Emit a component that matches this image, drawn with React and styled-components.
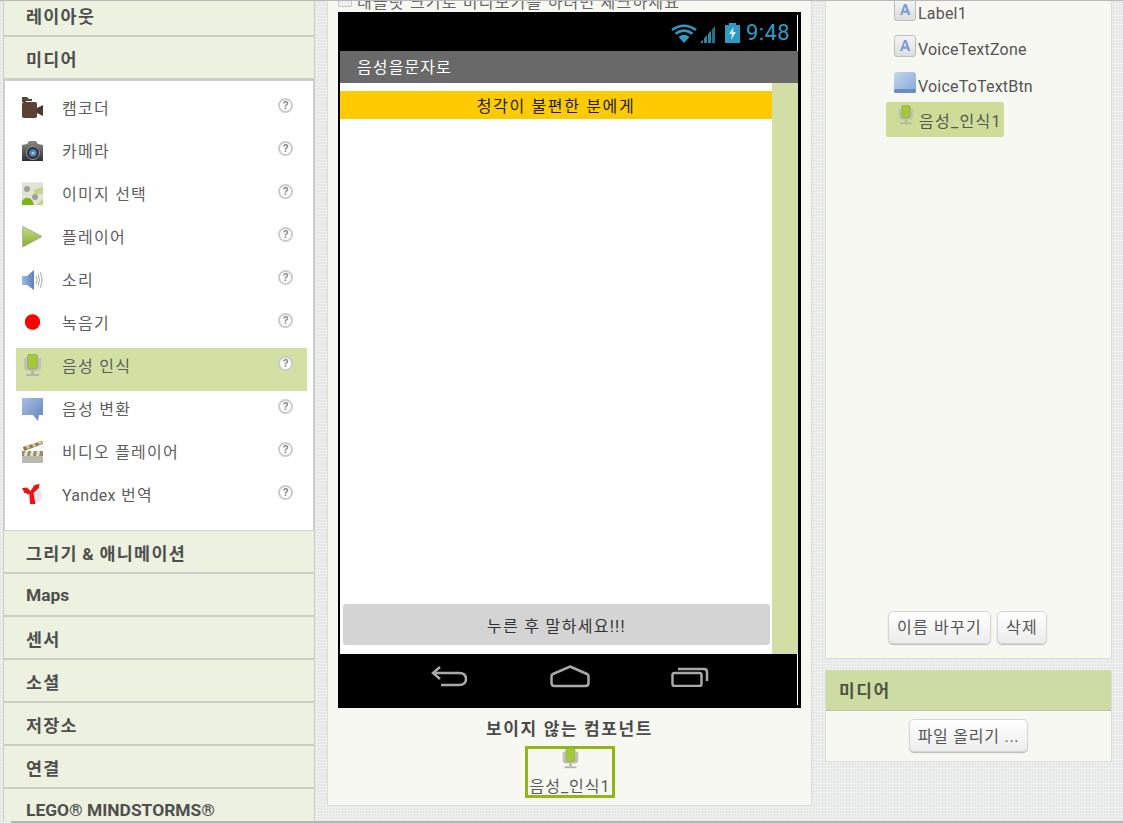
import React from "react";
import styled, { createGlobalStyle } from "styled-components";

const FONT = `Roboto, "Noto Sans CJK KR", "Liberation Sans", sans-serif`;

const Global = createGlobalStyle`
  html, body { margin: 0; padding: 0; height: 100%; overflow: hidden; }
  body { font-family: ${FONT}; color: #555; }
`;

const Page = styled.div`
  width: 1123px;
  height: 823px;
  box-sizing: border-box;
  border-top: 1px solid #b9b9b9;
  display: flex;
  flex-direction: column;
  overflow: hidden;
  background-color: #e9eaea;
  background-image:
    repeating-linear-gradient(0deg, rgba(255,255,255,.35) 0 1px, transparent 1px 3px),
    repeating-linear-gradient(90deg, rgba(0,0,0,.025) 0 1px, transparent 1px 3px);
`;
const Main = styled.div`
  flex: 1;
  min-height: 0;
  overflow: hidden;
  display: flex;
  align-items: flex-start;
  padding-left: 3px;
`;
const Footer = styled.div`
  height: 2px;
  margin-left: 11px;
  background: #b5b5b5;
`;

/* Palette */
const Palette = styled.div`
  width: 312px;
  flex: none;
  box-sizing: border-box;
  border-left: 1px solid #cbcbcb;
  border-right: 1px solid #cbcbcb;
  display: flex;
  flex-direction: column;
`;
const Drawer = styled.div`
  height: ${p => p.$height || 43}px;
  flex: none;
  box-sizing: border-box;
  padding: ${p => (p.$height || p.$latin ? 0 : 4)}px 0 ${p => (p.$height ? 2 : 0)}px 22px;
  display: flex;
  align-items: center;
  background: #edf1df;
  border-bottom: 2px solid #cccdc5;
  font-size: 17.4px;
  font-weight: 700;
  line-height: 20px;
  color: #4f4f4f;
  letter-spacing: ${p => (p.$latin ? "0" : "1.3px")};
  word-spacing: ${p => (p.$latin ? "0" : "-1.2px")};
  white-space: nowrap;
`;
const DrawerBody = styled.div`
  height: 451px;
  flex: none;
  box-sizing: border-box;
  background: #fff;
  border: 1px solid #cfcfcf;
  padding: 9px 6px 0 11px;
`;
const Row = styled.div`
  height: 43px;
  box-sizing: border-box;
  padding: 6px 14px 0 6px;
  display: flex;
  align-items: flex-start;
  gap: 19px;
  background: ${p => (p.$selected ? "#d2e0a3" : "transparent")};
`;
const RowIcon = styled.span`
  width: 21px;
  height: 24px;
  flex: none;
  display: block;
  svg { display: block; }
`;
const RowLabel = styled.span`
  flex: 1;
  margin-top: 3px;
  font-size: 16px;
  line-height: 20px;
  letter-spacing: 1.25px;
  color: #5e5e5e;
  white-space: nowrap;
`;
const Latin = styled.span`
  letter-spacing: 0.3px;
`;
const Help = styled.span`
  width: 15px;
  height: 15px;
  margin-top: 2px;
  flex: none;
  box-sizing: border-box;
  border: 2px solid #cbcbcb;
  border-radius: 50%;
  background: #fff;
  display: flex;
  align-items: center;
  justify-content: center;
  font-family: "Liberation Sans", sans-serif;
  font-size: 10px;
  font-weight: 700;
  line-height: 1;
  color: #858585;
`;

/* Viewer */
const Viewer = styled.div`
  width: 485px;
  height: 806px;
  flex: none;
  margin-top: -1px;
  margin-left: 12px;
  box-sizing: border-box;
  padding-left: 10px;
  background: #f8f8f3;
  border: 1px solid #dcdcd8;
  border-top: none;
  display: flex;
  flex-direction: column;
`;
const TabletRow = styled.label`
  height: 12px;
  width: 463px;
  overflow: hidden;
  display: flex;
  align-items: flex-end;
  gap: 5px;
  font-size: 16px;
  line-height: 20px;
  letter-spacing: 1.2px;
  color: #666;
  white-space: nowrap;
`;
const TabletBox = styled.span`
  width: 14px;
  height: 13px;
  flex: none;
  margin-bottom: 5px;
  box-sizing: border-box;
  border: 1px solid #c4c4c4;
  border-radius: 2px;
  background: #eee;
`;
const TabletText = styled.span`
  margin-bottom: -1px;
`;
const Phone = styled.div`
  width: 463px;
  height: 696px;
  flex: none;
  box-sizing: border-box;
  padding: 3px 3px 3px 2px;
  background: #000;
  display: flex;
  flex-direction: column;
`;
const StatusBar = styled.div`
  height: 36px;
  flex: none;
  box-sizing: border-box;
  border-right: 1px solid #fff;
  padding: 0 7px 0 0;
  display: flex;
  justify-content: flex-end;
  align-items: center;
  gap: 3px;
  svg { display: block; flex: none; }
  svg:nth-child(3) { margin-left: 7px; }
`;
const Clock = styled.span`
  font-size: 22px;
  line-height: 26px;
  color: #2f9bc4;
  margin-left: 3px;
  letter-spacing: 0.4px;
`;
const TitleBar = styled.div`
  height: 32px;
  flex: none;
  box-sizing: border-box;
  padding: 0 0 3px 17px;
  background: #696969;
  color: #fff;
  display: flex;
  align-items: center;
  font-size: 16px;
  letter-spacing: 1.1px;
`;
const Screen = styled.div`
  height: 571px;
  flex: none;
  display: flex;
  background: #fff;
`;
const ScreenMain = styled.div`
  width: 432px;
  flex: none;
  box-sizing: border-box;
  padding-top: 8px;
  display: flex;
  flex-direction: column;
  justify-content: space-between;
`;
const ScreenSide = styled.div`
  flex: 1;
  background: #d2dea6;
`;
const Banner = styled.div`
  height: 28px;
  background: #ffcb00;
  color: #1c1c1c;
  display: flex;
  align-items: center;
  justify-content: center;
  font-size: 16px;
  letter-spacing: 1.65px;
`;
const VoiceButton = styled.div`
  height: 41px;
  margin: 0 2px 9px 3px;
  border-radius: 3px;
  background: #d4d4d4;
  color: #333;
  display: flex;
  align-items: center;
  justify-content: center;
  font-size: 16px;
  letter-spacing: 1.3px;
`;
const NavBar = styled.div`
  height: 51px;
  flex: none;
  box-sizing: border-box;
  border-right: 1px solid #fff;
  padding: 12px 0 0 91px;
  display: flex;
  align-items: flex-start;
  gap: 81.5px;
  svg { display: block; flex: none; }
  svg:nth-child(2) { margin-top: -1px; }
`;
const HiddenTitle = styled.div`
  width: 463px;
  margin-top: 10px;
  text-align: center;
  font-size: 17px;
  font-weight: 700;
  line-height: 22px;
  letter-spacing: 1.6px;
  color: #4b4b4b;
`;
const HiddenItem = styled.div`
  align-self: flex-start;
  margin: 6px 0 0 187px;
  width: 90px;
  height: 52px;
  box-sizing: border-box;
  border: 3px solid #8fb814;
  display: flex;
  flex-direction: column;
  align-items: center;
  font-size: 16px;
  line-height: 20px;
  letter-spacing: 1px;
  color: #5a5a5a;
  white-space: nowrap;
  svg { display: block; flex: none; margin-top: -1px; }
`;
const HiddenLabel = styled.span`
  flex: none;
  margin-top: 7px;
`;

/* Right column */
const RightColumn = styled.div`
  width: 287px;
  flex: none;
  margin: -1px 0 0 13px;
  display: flex;
  flex-direction: column;
  gap: 11px;
`;
const TreePanel = styled.div`
  height: 659px;
  box-sizing: border-box;
  background: #f8f8f3;
  border: 1px solid #dcdcd8;
  border-top: none;
  display: flex;
  flex-direction: column;
  overflow: hidden;
`;
const Tree = styled.div`
  flex: 1;
  padding: 0 0 0 60px;
  margin-top: -1px;
  display: flex;
  flex-direction: column;
  align-items: flex-start;
`;
const TreeRow = styled.div`
  height: ${p => (p.$selected ? 35 : 36.3)}px;
  margin-top: ${p => (p.$selected ? -6 : 0)}px;
  box-sizing: border-box;
  padding: ${p => (p.$selected ? "3px 2px 0 11px" : "0 0 0 8px")};
  display: flex;
  align-items: flex-start;
  gap: ${p => (p.$selected ? 4 : 2)}px;
  background: ${p => (p.$selected ? "#cddc96" : "transparent")};
  border-radius: 2px;
  svg { display: block; flex: none; }
`;
const TreeLabel = styled.span`
  margin-top: ${p => (p.$selected ? 7 : 5)}px;
  font-size: 16px;
  line-height: 20px;
  letter-spacing: ${p => (p.$selected ? "1.3px" : "0.2px")};
  color: #555;
  white-space: nowrap;
`;
const Actions = styled.div`
  display: flex;
  justify-content: center;
  gap: 6px;
  padding: 0 2px 14px 0;
`;
const Button = styled.button`
  width: ${p => p.$w}px;
  height: 33px;
  flex: none;
  box-sizing: border-box;
  padding: 0 0 3px;
  border: 1px solid #d6d6d6;
  border-radius: 5px;
  background: linear-gradient(#fff, #ececec);
  box-shadow: 0 1px 1px rgba(0,0,0,.25);
  font-family: ${FONT};
  font-size: 16px;
  letter-spacing: ${p => (p.$tight ? "0.75px" : "1.25px")};
  color: #555;
  white-space: nowrap;
`;
const MediaPanel = styled.div`
  height: 92px;
  box-sizing: border-box;
  background: #f8f8f3;
  border: 1px solid #dcdcd8;
  border-top: none;
  display: flex;
  flex-direction: column;
  align-items: center;
`;
const MediaHeader = styled.div`
  align-self: stretch;
  height: 41px;
  flex: none;
  box-sizing: border-box;
  padding: 0 0 2px 13px;
  background: #cddca5;
  border-bottom: 1px solid #b8c59a;
  display: flex;
  align-items: center;
  font-size: 17px;
  font-weight: 700;
  letter-spacing: 1.6px;
  color: #505540;
`;
const UploadButton = styled(Button)`
  margin-top: 8px;
  padding-bottom: 2px;
`;

/* Icons */
const Camcorder = () => (
  <svg width="21" height="24" viewBox="0 0 21 24">
    <path d="M0 1h5l2 2h3v2H4v1H0z" fill="#5b463a" />
    <rect x="0" y="6" width="15" height="16" rx="2" fill="#5a4234" />
    <path d="M15 12l6-3v11l-6-3z" fill="#4b3a30" />
  </svg>
);
const Camera = () => (
  <svg width="21" height="24" viewBox="0 0 21 24">
    <defs>
      <linearGradient id="camBody" x1="0" y1="0" x2="0" y2="1">
        <stop offset="0" stopColor="#8a8a8a" />
        <stop offset="1" stopColor="#2f2f2f" />
      </linearGradient>
    </defs>
    <path d="M0 6l5-1 2-3h7l2 3 5 1v16H0z" fill="url(#camBody)" />
    <circle cx="11" cy="14" r="6.5" fill="#333" stroke="#999" strokeWidth="1" />
    <circle cx="11" cy="14" r="3.8" fill="#4f7fc0" />
    <circle cx="11" cy="14" r="1.6" fill="#a8c4e8" />
  </svg>
);
const ImagePicker = () => (
  <svg width="21" height="24" viewBox="0 0 21 24">
    <rect x="0" y="1" width="21" height="22" fill="#e4e4d6" stroke="#cfcfc4" strokeWidth=".5" />
    <path d="M12 8l9-3v7h-9z" fill="#c3d687" />
    <path d="M0 23v-4q4-6 10-1l2 5z" fill="#7cb518" />
    <path d="M14 23l7-6v6z" fill="#c3d687" />
    <circle cx="5" cy="7" r="3" fill="#a0a0a0" />
    <circle cx="13" cy="15" r="3" fill="#a0a0a0" />
  </svg>
);
const Play = () => (
  <svg width="21" height="24" viewBox="0 0 21 24">
    <defs>
      <linearGradient id="playFill" x1="0" y1="0" x2="0" y2="1">
        <stop offset="0" stopColor="#c4de82" />
        <stop offset="1" stopColor="#86ad33" />
      </linearGradient>
    </defs>
    <path d="M.7 1.5L20 11.5 .7 22z" fill="url(#playFill)" stroke="#a3ad8e" />
  </svg>
);
const Speaker = () => (
  <svg width="21" height="24" viewBox="0 0 21 24">
    <defs>
      <linearGradient id="spkFill" x1="0" y1="0" x2="1" y2="0">
        <stop offset="0" stopColor="#9db9e0" />
        <stop offset="1" stopColor="#5c82bb" />
      </linearGradient>
    </defs>
    <path d="M0 8h5l7-6v20l-7-5H0z" fill="url(#spkFill)" />
    <g fill="none" stroke="#aaa" strokeWidth="1">
      <path d="M14 8q2 4 0 8" />
      <path d="M16 6q3 6 0 12" />
      <path d="M18 4q4 8 0 16" />
    </g>
  </svg>
);
const Record = () => (
  <svg width="21" height="24" viewBox="0 0 21 24">
    <circle cx="10.5" cy="11" r="7.7" fill="#f00" />
  </svg>
);
const Mic = ({ w = 21, h = 24 }) => (
  <svg width={w} height={h} viewBox="0 0 21 24">
    <path d="M2 4v9q0 4 4 4h9q4 0 4-4V4h-3v8H5V4z" fill="#bfc2b4" />
    <rect x="9" y="17" width="3" height="3" fill="#b3b5a9" />
    <rect x="4" y="20" width="13" height="2" fill="#b3b5a9" />
    <rect x="5.500" y="0" width="10" height="15" rx="3" fill="#a3c93a" stroke="#8f9a78" strokeWidth=".7" />
  </svg>
);
const Bubble = () => (
  <svg width="21" height="24" viewBox="0 0 21 24">
    <defs>
      <linearGradient id="bubFill" x1="0" y1="0" x2="1" y2="1">
        <stop offset="0" stopColor="#a9c0e2" />
        <stop offset="1" stopColor="#5e85c0" />
      </linearGradient>
    </defs>
    <path d="M0 1h21v17h-4l-1 6-5-6H0z" fill="url(#bubFill)" />
  </svg>
);
const Clapper = () => (
  <svg width="21" height="24" viewBox="0 0 21 24">
    <path d="M1 7L20 1l1 3L2 11z" fill="#8d7a4b" />
    <path d="M4 6l3-1 1 3-3 1zM10 4l3-1 1 3-3 1zM16 2l3-1 1 3-3 1z" fill="#d7ca9a" />
    <rect x="0" y="11" width="21" height="5" fill="#9a8e68" />
    <path d="M3 11h3l-1 5H2zM9 11h3l-1 5H8zM15 11h3l-1 5h-3z" fill="#e6e2cf" />
    <rect x="0" y="16" width="21" height="7" rx="1" fill="#b9b9b2" />
  </svg>
);
const Yandex = () => (
  <svg width="21" height="24" viewBox="0 0 21 24">
    <circle cx="13" cy="13" r="7" fill="#e6e8f2" />
    <path d="M0 5l5-.5 3.500 3.500 4-6 5-1-.5 4-5.500 5 2 11H8l-.5-9.500L2.500 10z" fill="#ee1212" />
  </svg>
);
const Wifi = () => (
  <svg width="26" height="19" viewBox="0 0 26 19">
    <g fill="none" stroke="#2f9bc4" strokeWidth="2.6">
      <path d="M1 6Q13-2.500 25 6" />
      <path d="M4.500 9.800Q13 3.500 21.500 9.800" />
    </g>
    <path d="M7.500 13Q13 8.500 18.500 13L13 19z" fill="#2f9bc4" />
  </svg>
);
const Signal = () => (
  <svg width="15" height="19" viewBox="0 0 15 19">
    <path d="M0 19l3-3.400V19zM4 19v-4.500l3-3.500v8zM8 19V10l3-3.500V19z" fill="#2f86a8" />
    <path d="M12 19V5.500L15 2v17z" fill="#256f8b" />
  </svg>
);
const Battery = () => (
  <svg width="15" height="20" viewBox="0 0 15 20">
    <path d="M4 0h7v2h4v18H0V2h4z" fill="#2f9bc4" />
    <path d="M8.500 4L4 11h3l-1 6 5-8H8z" fill="#d5eef7" />
  </svg>
);
const Back = () => (
  <svg width="37" height="21" viewBox="0 0 37 21" fill="none" stroke="#a9a9a9" strokeWidth="2.500">
    <path d="M9 1L2 7l7 6" />
    <path d="M2 7h26q7 0 7 6t-7 6H10" />
  </svg>
);
const Home = () => (
  <svg width="40" height="23" viewBox="0 0 40 23" fill="none" stroke="#a9a9a9" strokeWidth="2.500">
    <path d="M20 1.500L37 9q1.500 .7 1.500 2v7q0 3-3 3h-31q-3 0-3-3v-7q0-1.300 1.500-2z" />
  </svg>
);
const Recent = () => (
  <svg width="38" height="21" viewBox="0 0 38 21" fill="none" stroke="#a9a9a9" strokeWidth="2.500">
    <rect x="1.500" y="7" width="29" height="13" rx="2" />
    <path d="M7 3h26q3 0 3 3v9" />
  </svg>
);
const LabelIcon = () => (
  <svg width="22" height="22" viewBox="0 0 22 22">
    <defs>
      <linearGradient id="lblFill" x1="0" y1="0" x2="0" y2="1">
        <stop offset="0" stopColor="#f5f5f7" />
        <stop offset="1" stopColor="#dcdcdc" />
      </linearGradient>
    </defs>
    <rect x=".5" y=".5" width="21" height="21" rx="2" fill="url(#lblFill)" stroke="#bdbdbd" />
    <path d="M6 16L10 5h2.500L16.500 16h-2.700l-.7-2.300H9L8.400 16zM9.700 11.600h2.700L11 7.500z" fill="#7b9fd4" />
  </svg>
);
const ButtonIcon = () => (
  <svg width="22" height="22" viewBox="0 0 22 22">
    <defs>
      <linearGradient id="btnFill" x1="0" y1="0" x2="1" y2="1">
        <stop offset="0" stopColor="#c4d6ee" />
        <stop offset="1" stopColor="#86a8d8" />
      </linearGradient>
    </defs>
    <rect x="0" y="0" width="22" height="21" rx="3" fill="url(#btnFill)" />
    <rect x="0" y="17" width="22" height="4" rx="1.500" fill="#6c8cbd" />
  </svg>
);

const ITEMS = [
  ["캠코더", Camcorder],
  ["카메라", Camera],
  ["이미지 선택", ImagePicker],
  ["플레이어", Play],
  ["소리", Speaker],
  ["녹음기", Record],
  ["음성 인식", Mic, true],
  ["음성 변환", Bubble],
  ["비디오 플레이어", Clapper],
  [<React.Fragment key="y"><Latin>Yandex</Latin> 번역</React.Fragment>, Yandex],
];

export default function App() {
  return (
    <Page>
      <Global />
      <Main>
        <Palette>
          <Drawer $height={36}>레이아웃</Drawer>
          <Drawer>미디어</Drawer>
          <DrawerBody>
            {ITEMS.map(([label, Icon, selected], i) => (
              <Row key={i} $selected={selected}>
                <RowIcon><Icon /></RowIcon>
                <RowLabel>{label}</RowLabel>
                <Help>?</Help>
              </Row>
            ))}
          </DrawerBody>
          <Drawer>그리기 & 애니메이션</Drawer>
          <Drawer $latin>Maps</Drawer>
          <Drawer>센서</Drawer>
          <Drawer>소셜</Drawer>
          <Drawer>저장소</Drawer>
          <Drawer>연결</Drawer>
          <Drawer $latin>LEGO® MINDSTORMS®</Drawer>
        </Palette>

        <Viewer>
          <TabletRow>
            <TabletBox />
            <TabletText>태블릿 크기로 미리보기를 하려면 체크하세요</TabletText>
          </TabletRow>
          <Phone>
            <StatusBar>
              <Wifi />
              <Signal />
              <Battery />
              <Clock>9:48</Clock>
            </StatusBar>
            <TitleBar>음성을문자로</TitleBar>
            <Screen>
              <ScreenMain>
                <Banner>청각이 불편한 분에게</Banner>
                <VoiceButton>누른 후 말하세요!!!</VoiceButton>
              </ScreenMain>
              <ScreenSide />
            </Screen>
            <NavBar>
              <Back />
              <Home />
              <Recent />
            </NavBar>
          </Phone>
          <HiddenTitle>보이지 않는 컴포넌트</HiddenTitle>
          <HiddenItem>
            <Mic h={22} />
            <HiddenLabel>음성_인식1</HiddenLabel>
          </HiddenItem>
        </Viewer>

        <RightColumn>
          <TreePanel>
            <Tree>
              <TreeRow><LabelIcon /><TreeLabel>Label1</TreeLabel></TreeRow>
              <TreeRow><LabelIcon /><TreeLabel>VoiceTextZone</TreeLabel></TreeRow>
              <TreeRow><ButtonIcon /><TreeLabel>VoiceToTextBtn</TreeLabel></TreeRow>
              <TreeRow $selected><Mic w={18} h={21} /><TreeLabel $selected>음성_인식1</TreeLabel></TreeRow>
            </Tree>
            <Actions>
              <Button $w={103}>이름 바꾸기</Button>
              <Button $w={50}>삭제</Button>
            </Actions>
          </TreePanel>
          <MediaPanel>
            <MediaHeader>미디어</MediaHeader>
            <UploadButton $w={119} $tight>파일 올리기 ...</UploadButton>
          </MediaPanel>
        </RightColumn>
      </Main>
      <Footer />
    </Page>
  );
}
